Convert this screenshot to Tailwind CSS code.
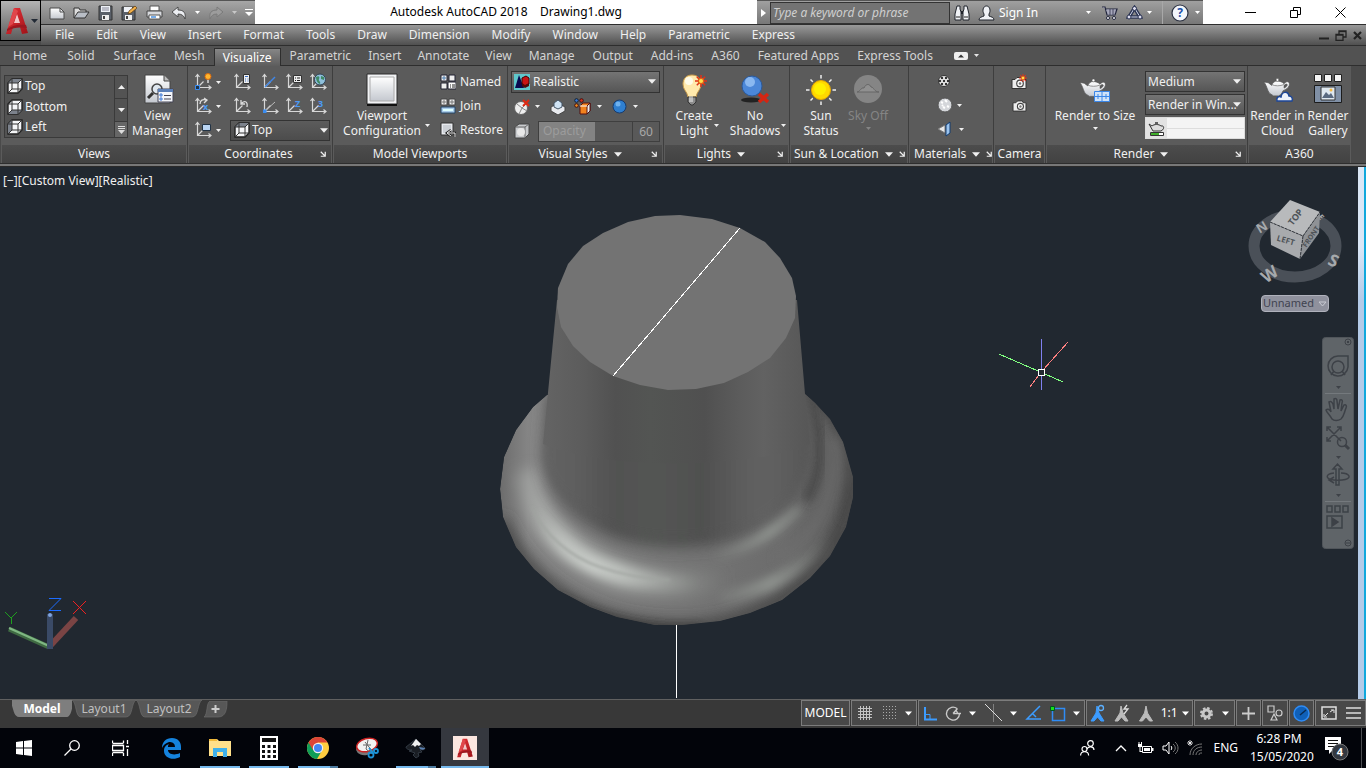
<!DOCTYPE html>
<html lang="en">
<head>
    <meta charset="UTF-8">
    <meta name="viewport" content="width=device-width, initial-scale=1.0">
    <title>Autodesk AutoCAD 2018 - Drawing1.dwg</title>
    <script src="https://cdn.jsdelivr.net/npm/@tailwindcss/browser@4"></script>
</head>
<body class="flex flex-col h-screen overflow-hidden bg-[#212830] font-['Noto_Sans','Open_Sans',sans-serif] text-xs text-[#f0f0f0]">

    <!-- Shared icons -->
    <svg class="absolute size-0" aria-hidden="true">
        <defs>
            <linearGradient id="metal" x1="0" y1="0" x2="0" y2="1"><stop offset="0" stop-color="#fff"/><stop offset="1" stop-color="#c4c8cf"/></linearGradient>
            <linearGradient id="redA" x1="0" y1="0" x2="1" y2="1"><stop offset="0" stop-color="#e8343a"/><stop offset="1" stop-color="#a01218"/></linearGradient>
        </defs>
        <symbol id="caret" viewBox="0 0 7 4"><path d="M0 0h7L3.500 4z" fill="currentColor"/></symbol>
        <symbol id="launch" viewBox="0 0 8 8"><path d="M1 1l5 5M7 1v6H1" fill="none" stroke="currentColor" stroke-width="1.600"/></symbol>
        <symbol id="cube" viewBox="0 0 16 16"><path d="M1 5l4-4h10v10l-4 4H1z" fill="#f4f5f7" stroke="#222" stroke-width="1.400"/></symbol>
        <symbol id="cubeEdges" viewBox="0 0 16 16"><path d="M1 5h10v10M11 5l4-4M5 1v10h10M5 11l-4 4" fill="none" stroke="#333"/></symbol>
        <symbol id="axes" viewBox="0 0 18 18"><path d="M3.500 2v12.500H17M3.500 14.500l6-6M1.500 4l2-2.500 2 2.500M14.500 12.500l2.500 2-2.500 2" fill="none" stroke="#d8d8d8" stroke-width="1.200"/></symbol>
        <symbol id="teapot" viewBox="0 0 32 24"><path d="M1 5l5 1 4 3c1-3 3-5 6-5s6 1 8 3c4-4 7-2 6 2-1 3-4 5-7 6l-2 4-3 2h-6l-3-2C5 17 5 10 1 5z" fill="url(#metal)" stroke="#555" stroke-width=".8"/><path d="M24 9c3-3 5-1 3 1-1 1-2 2-3 2z" fill="#5b5b5b" stroke="#555" stroke-width=".6"/><path d="M10 8c3 2 10 2 14 0" fill="none" stroke="#888"/><circle cx="16.500" cy="2.800" r="1.600" fill="#fff" stroke="#555" stroke-width=".6"/></symbol>
        <symbol id="logoA" viewBox="0 0 24 28"><path d="M1 27L9 1h6l8 25-6 1-2-7H8l-2 7z" fill="url(#redA)"/><path d="M12 7l3 9H9z" fill="#fff" fill-opacity=".75"/><path d="M9 1L3 20l5-3 5-13z" fill="#e0464b"/><path d="M2 22c6-4 12-5 19-4l1 3c-7-1-13-1-20 3z" fill="#9c1820"/></symbol>
        <symbol id="burst" viewBox="0 0 10 10"><path d="M5 0v10M0 5h10M1.500 1.500l7 7M8.500 1.500l-7 7" stroke="#e0301a" stroke-width="1.300"/><circle cx="5" cy="5" r="2.200" fill="#ffe04a" stroke="#e0601a"/></symbol>
        <symbol id="camera" viewBox="0 0 16 13"><path d="M1 3h3l2-2h5l1 2h3v9H1z" fill="#eee" stroke="#333"/><circle cx="9" cy="7" r="3.300" fill="#fff" stroke="#444" stroke-width="1.200"/><circle cx="9" cy="7" r="1.300" fill="#777"/></symbol>
    </svg>

    <!-- Title bar and menu bar -->
    <header class="flex shrink-0 h-[46px] bg-[#4b4b4b] border-b border-[#2e2e2e]">
        <button aria-label="Application menu" class="flex items-center gap-0.5 w-[41px] h-[41px] pl-1 border border-black bg-linear-to-b from-[#b4b4b4] to-[#5c5c5c]">
            <svg class="w-6 h-7"><use href="#logoA"/></svg>
            <svg class="w-[7px] h-1 text-[#222a35]"><use href="#caret"/></svg>
        </button>
        <div class="flex flex-col flex-1">
            <div class="flex items-stretch h-6 bg-white text-black">
                <div class="flex items-center gap-2 w-[214px] pl-2 bg-linear-to-b from-[#a6a6a6] to-[#7b7b7b] border-t border-[#555] [&>*]:shrink-0">
                    <button aria-label="New"><svg width="16" height="16" viewBox="0 0 16 16"><path d="M1 3h10l4 4v7H1z" fill="url(#metal)" stroke="#4a4a4a"/><path d="M11 3v4h4" fill="none" stroke="#4a4a4a"/></svg></button>
                    <button aria-label="Open"><svg width="17" height="16" viewBox="0 0 17 16"><path d="M1 13V3h5l1 2h6v2" fill="#ddd" stroke="#333"/><path d="M1 13l4-6h11l-4 6z" fill="#b9bec6" stroke="#333"/></svg></button>
                    <button aria-label="Save"><svg width="15" height="16" viewBox="0 0 15 16"><path d="M1 1h13v14H1z" fill="#5a6069" stroke="#333"/><path d="M3 1h9v6H3z" fill="#eef1f6"/><path d="M4 3h7M4 5h7" stroke="#889"/><path d="M4 10h7v5H4z" fill="#eee"/><path d="M5 11h2v3H5z" fill="#444"/></svg></button>
                    <button aria-label="Save As"><svg width="17" height="16" viewBox="0 0 17 16"><path d="M1 2h13v13H1z" fill="#5a6069" stroke="#333"/><path d="M3 2h8v5H3z" fill="#eef1f6"/><path d="M4 10h7v5H4z" fill="#eee"/><path d="M5 11h2v3H5z" fill="#444"/><path d="M7 9l1-3 6-5 2 2-6 5z" fill="#f2b04a" stroke="#5a3a10" stroke-width=".7"/></svg></button>
                    <button aria-label="Plot"><svg width="17" height="16" viewBox="0 0 17 16"><path d="M4 1h9v5H4z" fill="#fff" stroke="#555"/><path d="M1 6h15v6H1z" fill="#d8dade" stroke="#444"/><path d="M3 10h11v4H3z" fill="#fff" stroke="#555"/><path d="M5 12h5" stroke="#4a90e0" stroke-width="1.500"/></svg></button>
                    <button aria-label="Undo"><svg width="16" height="16" viewBox="0 0 16 16"><path d="M1 7l6-5v3c6 0 8 3 7 9-1-3-3-5-7-5v3z" fill="#eceef2" stroke="#444" stroke-width=".9"/></svg></button>
                    <svg class="w-[5px] h-[3px] text-white"><use href="#caret"/></svg>
                    <button aria-label="Redo"><svg width="16" height="16" viewBox="0 0 16 16"><path d="M15 7L9 2v3C3 5 1 8 2 14c1-3 3-5 7-5v3z" fill="#9c9c9c" stroke="#7a7a7a"/></svg></button>
                    <svg class="w-[5px] h-[3px] text-[#c8c8c8]"><use href="#caret"/></svg>
                    <button aria-label="Customize toolbar"><svg width="8" height="8" viewBox="0 0 8 8"><path d="M0 .5h8" stroke="#fff"/><path d="M0 3h8L4 7z" fill="#fff"/></svg></button>
                </div>
                <h1 class="flex-1 flex items-center justify-center whitespace-pre">Autodesk AutoCAD 2018    Drawing1.dwg</h1>
                <div class="flex items-center w-[446px] bg-linear-to-b from-[#a0a0a0] to-[#777] border-t border-[#555] text-white [&>*]:shrink-0">
                    <svg class="mx-1" width="5" height="8" viewBox="0 0 5 8"><path d="M0 0l5 4-5 4z" fill="#fff"/></svg>
                    <input type="text" aria-label="Search" placeholder="Type a keyword or phrase" class="w-[180px] h-[22px] px-0.5 bg-[#737373] border border-[#333] italic placeholder:text-[#cfcfcf]">
                    <button aria-label="Find" class="ml-1"><svg width="16" height="16" viewBox="0 0 16 16"><path d="M3 1h3v3l1 3v8H1V9zM13 1h-3v3L9 7v8h6V9z" fill="#f0f2f6" stroke="#20242c"/><path d="M7 6h2v3H7z" fill="#20242c"/><path d="M2 12h4M10 12h4" stroke="#222"/></svg></button>
                    <button class="flex items-center gap-1 ml-2 whitespace-nowrap text-white"><svg width="17" height="16" viewBox="0 0 17 16"><path d="M1 15c0-3 3-3 5-4V9C4 6 5 1 8.500 1S13 6 11 9v2c2 1 5 1 5 4z" fill="#f0f2f6" stroke="#20242c"/></svg>Sign In</button>
                    <svg class="w-[5px] h-[3px] ml-12"><use href="#caret"/></svg>
                    <button aria-label="Exchange Apps" class="ml-2.5"><svg width="17" height="16" viewBox="0 0 17 16"><path d="M1 2h3l2 8h8l2-6H5" fill="#eef" stroke="#20243c" stroke-width="1.200"/><path d="M6 6h9M6 8h8M9 4v6M12 4v6" stroke="#20243c" stroke-width=".7"/><circle cx="7" cy="13" r="1.500" fill="#fff" stroke="#20243c"/><circle cx="13" cy="13" r="1.500" fill="#fff" stroke="#20243c"/></svg></button>
                    <button aria-label="Stay connected" class="ml-2"><svg width="17" height="16" viewBox="0 0 17 16"><path d="M8.500 3L3 12h11z" fill="none" stroke="#2a3352" stroke-width="3.500"/><path d="M8.500 3L3 12h11z" fill="none" stroke="#cfd6ea"/><circle cx="8.500" cy="3.500" r="2" fill="#dde" stroke="#2a3352"/><circle cx="3" cy="12" r="2" fill="#dde" stroke="#2a3352"/><circle cx="14" cy="12" r="2" fill="#dde" stroke="#2a3352"/></svg></button>
                    <svg class="w-[5px] h-[3px] ml-1"><use href="#caret"/></svg>
                    <span class="w-px h-full ml-2.5 bg-[#a8a8a8]"></span>
                    <button aria-label="Help" class="ml-2"><svg width="18" height="18" viewBox="0 0 18 18"><circle cx="9" cy="9" r="8" fill="#f3f6fb" stroke="#2a3040" stroke-width="1.200"/><text x="9" y="13" text-anchor="middle" font-size="12" font-weight="bold" fill="#1c4fa8">?</text></svg></button>
                    <svg class="w-[5px] h-[3px] ml-1.5"><use href="#caret"/></svg>
                </div>
                <div class="flex items-center justify-between w-[163px] pl-[42px] pr-5">
                    <button aria-label="Minimize"><svg width="11" height="11" viewBox="0 0 11 11"><path d="M0 5.500h11" stroke="#000"/></svg></button>
                    <button aria-label="Restore"><svg width="11" height="11" viewBox="0 0 11 11"><path d="M.5 3.500h7v7h-7zM3.500 3V.5h7v7H8" fill="none" stroke="#000"/></svg></button>
                    <button aria-label="Close"><svg width="11" height="11" viewBox="0 0 11 11"><path d="M.5.5l10 10M10.500.5l-10 10" stroke="#000"/></svg></button>
                </div>
            </div>
            <div class="flex items-center justify-between h-[21px] pl-3.5 pr-1 border-t border-[#2e2e2e] bg-linear-to-b from-[#9a9a9a] to-[#505050]">
                <nav class="flex gap-[22px]">
                    <button>File</button><button>Edit</button><button>View</button><button>Insert</button><button>Format</button><button>Tools</button><button>Draw</button><button>Dimension</button><button>Modify</button><button>Window</button><button>Help</button><button>Parametric</button><button>Express</button>
                </nav>
                <div class="flex items-center gap-1.5">
                    <svg width="10" height="10" viewBox="0 0 10 10"><path d="M0 8.500h10" stroke="#222" stroke-width="2"/></svg>
                    <svg width="12" height="11" viewBox="0 0 12 11"><path d="M1 4.500h7v6H1zM4 4V1h7v6H8M4 1.500h7M1 5h7" fill="none" stroke="#222" stroke-width="1.300"/></svg>
                    <svg width="9" height="9" viewBox="0 0 9 9"><path d="M1 1l7 7M8 1L1 8" stroke="#222" stroke-width="2.200"/></svg>
                </div>
            </div>
        </div>
    </header>

    <!-- Ribbon tabs -->
    <nav class="flex shrink-0 h-5 pl-[3px] bg-[#525252] border-b border-[#2e2e2e] leading-[19px] text-[#d4d4d4]">
        <button class="px-2.5">Home</button>
        <button class="px-2.5">Solid</button>
        <button class="px-[9px]">Surface</button>
        <button class="px-[9px]">Mesh</button>
        <button class="h-[18px] px-2 mt-0.5 leading-4 text-white border border-b-0 border-[#2e2e2e] bg-linear-to-b from-[#868686] to-[#5d5d5d]">Visualize</button>
        <button class="px-[9px]">Parametric</button>
        <button class="px-2">Insert</button>
        <button class="px-2">Annotate</button>
        <button class="px-2">View</button>
        <button class="px-[9px]">Manage</button>
        <button class="px-[9px]">Output</button>
        <button class="px-[9px]">Add-ins</button>
        <button class="px-[9px]">A360</button>
        <button class="px-[9px]">Featured Apps</button>
        <button class="px-[9px]">Express Tools</button>
        <button aria-label="Minimize ribbon" class="flex items-center gap-1.5 ml-3 text-[#e4e4e4]">
            <svg width="14" height="8" viewBox="0 0 14 8"><rect width="14" height="8" rx="2" fill="#eee"/><path d="M4 5.500L7 2.500l3 3z" fill="#333"/></svg>
            <svg class="w-[5px] h-[3px]"><use href="#caret"/></svg>
        </button>
    </nav>

    <!-- Ribbon panels -->
    <main class="flex shrink-0 h-[98px] pl-px bg-[#4a4a4a] border-b border-[#2e2e2e]">
        <section class="flex flex-col w-[187px] bg-[#5b5b5b] border-r border-[#3e3e3e]">
            <div class="flex flex-1 pl-[3px]">
                <div class="flex w-[124px] h-[63px] mt-[9px] border border-[#3a3a3a] bg-[#535353]">
                    <div class="flex-1 flex flex-col justify-between">
                        <button class="flex items-center gap-0.5 h-5 pl-0.5"><svg class="size-4" viewBox="0 0 16 16"><use href="#cube"/><path d="M1 5l4-4h10l-4 4z" fill="#7c828c"/><use href="#cubeEdges"/></svg>Top</button>
                        <button class="flex items-center gap-0.5 h-5 pl-0.5"><svg class="size-4" viewBox="0 0 16 16"><use href="#cube"/><path d="M1 15l4-4h10l-4 4z" fill="#7c828c"/><use href="#cubeEdges"/></svg>Bottom</button>
                        <button class="flex items-center gap-0.5 h-5 pl-0.5"><svg class="size-4" viewBox="0 0 16 16"><use href="#cube"/><path d="M1 5l4-4v10l-4 4z" fill="#7c828c"/><use href="#cubeEdges"/></svg>Left</button>
                    </div>
                    <div class="flex flex-col w-[13px] border-l border-[#3a3a3a] divide-y divide-[#3a3a3a]">
                        <button aria-label="Scroll up" class="flex-1 grid place-items-center"><svg class="w-[7px] h-1 rotate-180"><use href="#caret"/></svg></button>
                        <button aria-label="Scroll down" class="flex-1 grid place-items-center"><svg class="w-[7px] h-1"><use href="#caret"/></svg></button>
                        <button aria-label="Expand list" class="w-full h-[15px] grid place-items-center bg-[#666]"><svg width="7" height="8" viewBox="0 0 7 8"><path d="M0 .5h7M0 2.500h7" stroke="#ddd"/><path d="M0 4h7L3.500 8z" fill="#ddd"/></svg></button>
                    </div>
                </div>
                <button class="flex-1 flex flex-col items-center gap-0.5 pt-2 leading-[15px]">
                    <svg width="32" height="32" viewBox="0 0 32 32"><path d="M3 1h19l6 6v22H3z" fill="url(#metal)" stroke="#444"/><path d="M22 1v6h6" fill="#bbb" stroke="#444"/><circle cx="15" cy="15" r="5" fill="#dfe7ef" stroke="#444" stroke-width="1.500"/><path d="M11 19l-5 5" stroke="#333" stroke-width="3"/><path d="M16 15h15v13H16z" fill="#f4f6fa" stroke="#445"/><path d="M16 15h15v3H16z" fill="#5a7fb8"/><path d="M22 21.500h7M22 25h7" stroke="#445"/><path d="M18 20h2v2h-2zM18 24h2v2h-2z" fill="none" stroke="#3a78d8"/></svg>
                    <span>View<br>Manager</span>
                </button>
            </div>
            <h2 class="h-[18px] mx-px text-center leading-[18px] bg-linear-to-b from-[#4c4c4c] to-[#424242]">Views</h2>
        </section>

        <section class="flex flex-col w-[145px] bg-[#5b5b5b] border-r border-[#3e3e3e]">
            <div class="flex-1 flex flex-col gap-1.5 pt-[7px] pl-1.5">
                <div class="flex items-center h-[18px]">
                    <button aria-label="UCS origin"><svg width="18" height="18" viewBox="0 0 18 18"><use href="#axes"/><path d="M1.500 12.500h4v4h-4z" fill="#234" stroke="#3a8cf0"/><path d="M14 2v8" stroke="#ddd" stroke-width="1.500"/><circle cx="14" cy="3.500" r="3" fill="#ffb52e" stroke="#d86a10"/></svg></button>
                    <svg class="w-[5px] h-[3px] ml-1 mr-3"><use href="#caret"/></svg>
                    <button aria-label="UCS settings"><svg width="18" height="18" viewBox="0 0 18 18"><use href="#axes"/><path d="M10.500 1.500h6v9h-6z" fill="#eee" stroke="#333"/><path d="M12 3.500h3M12 6h1M14.500 6h1M12 8h1M14.500 8h1" stroke="#3a6cc0"/></svg></button>
                    <button aria-label="UCS X" class="ml-2.5"><svg width="18" height="18" viewBox="0 0 18 18"><use href="#axes"/><path d="M4 14L14 4" stroke="#3f86e8" stroke-width="1.500"/></svg></button>
                    <button aria-label="Named UCS" class="ml-1.5"><svg width="18" height="18" viewBox="0 0 18 18"><use href="#axes"/><path d="M8.500 2.500h8v7h-8z" fill="#eee" stroke="#333"/><path d="M10 5h1M12 5h3M10 7.500h1M12 7.500h3" stroke="#222"/></svg></button>
                    <button aria-label="World UCS" class="ml-1.5"><svg width="18" height="18" viewBox="0 0 18 18"><use href="#axes"/><circle cx="11" cy="6.500" r="5.500" fill="#8fc0dc" stroke="#345"/><path d="M7 4c3-2 4 0 3 2s2 2 1 5c-3-1-4-4-4-7zM12 3l3 1v3l-3-1z" fill="#3f8a66"/></svg></button>
                </div>
                <div class="flex items-center h-[18px]">
                    <button aria-label="Rotate X"><svg class="overflow-visible" width="18" height="18" viewBox="0 0 18 18"><use href="#axes"/><path d="M6 7c0-4 3-5 6-4M10 1l3 2-3 3" fill="none" stroke="#ddd" stroke-width="1.300"/><text x="9" y="13" font-size="9" font-weight="bold" fill="#4b9af5">x</text></svg></button>
                    <svg class="w-[5px] h-[3px] ml-1 mr-3"><use href="#caret"/></svg>
                    <button aria-label="UCS previous"><svg width="18" height="18" viewBox="0 0 18 18"><use href="#axes"/><path d="M8 3v4h4M8 7c3-4 7-3 6 3" fill="none" stroke="#ddd" stroke-width="1.300"/></svg></button>
                    <button aria-label="UCS object" class="ml-2.5"><svg width="18" height="18" viewBox="0 0 18 18"><use href="#axes"/><path d="M4 14L14 5" stroke="#bbb"/><path d="M2 12.500h3.500V16H2z" fill="#3a8cf0"/></svg></button>
                    <button aria-label="Z axis vector" class="ml-1.5"><svg class="overflow-visible" width="18" height="18" viewBox="0 0 18 18"><use href="#axes"/><text x="10" y="10" font-size="9" font-weight="bold" fill="#4b9af5">Z</text></svg></button>
                    <button aria-label="3 point" class="ml-1.5"><svg class="overflow-visible" width="18" height="18" viewBox="0 0 18 18"><use href="#axes"/><text x="9" y="10" font-size="9" font-weight="bold" fill="#4b9af5">3</text></svg></button>
                </div>
                <div class="flex items-center h-[18px]">
                    <button aria-label="UCS view"><svg width="18" height="18" viewBox="0 0 18 18"><use href="#axes"/><path d="M8.500 3.500h8v6h-8z" fill="#b9d4f2" stroke="#234"/></svg></button>
                    <svg class="w-[5px] h-[3px] ml-1 mr-[9px]"><use href="#caret"/></svg>
                    <div class="relative w-[100px] h-[21px]">
                        <select aria-label="UCS preset" class="appearance-none w-full h-full pl-[21px] border border-[#333] bg-linear-to-b from-[#5c5c5c] to-[#4c4c4c]"><option>Top</option></select>
                        <svg class="absolute left-1 top-0.5 size-4 pointer-events-none" viewBox="0 0 16 16"><use href="#cube"/><path d="M1 5l4-4h10l-4 4z" fill="#7c828c"/><use href="#cubeEdges"/></svg>
                        <svg class="absolute right-0.5 top-2 w-2 h-[5px] pointer-events-none"><use href="#caret"/></svg>
                    </div>
                </div>
            </div>
            <h2 class="flex items-center h-[18px] mx-px pl-2 pr-[5px] bg-linear-to-b from-[#4c4c4c] to-[#424242]"><span class="flex-1 text-center">Coordinates</span><svg class="size-1.5"><use href="#launch"/></svg></h2>
        </section>

        <section class="flex flex-col w-[175px] bg-[#5b5b5b] border-r border-[#3e3e3e]">
            <div class="flex-1 flex">
                <button class="flex flex-col items-center gap-0.5 w-[98px] pt-[7px] leading-[15px]">
                    <svg width="32" height="33" viewBox="0 0 32 33"><path d="M1 1h30v30H1z" fill="#f2f3f5" stroke="#2c2c2c"/><path d="M4 4h24v24H4z" fill="url(#metal)" stroke="#aaa"/><path d="M1 32h30" stroke="#111" stroke-width="2"/></svg>
                    <span>Viewport<br>Configuration</span>
                </button>
                <svg class="w-[5px] h-[3px] mt-[58px] -ml-1.5 shrink-0"><use href="#caret"/></svg>
                <div class="flex flex-col gap-2 pt-2 pl-2.5">
                    <button class="flex items-center gap-1 h-4"><svg width="16" height="16" viewBox="0 0 16 16"><path d="M1 1h6v6H1zM9 1h6v6H9zM1 9h6v6H1z" fill="#eee" stroke="#223" /><path d="M3 3h2v2H3z" fill="#fff" stroke="#47a"/><path d="M8 8h8v7H8z" fill="#fff" stroke="#223"/><path d="M10 11h1M12 11h3M10 13h1M12 13h3" stroke="#222"/></svg>Named</button>
                    <button class="flex items-center gap-1 h-4"><svg width="16" height="16" viewBox="0 0 16 16"><path d="M1 1h6v6H1zM9 1h6v6H9z" fill="#eee" stroke="#444"/><path d="M3 3h2v2H3zM11 3h2v2h-2z" fill="none" stroke="#777"/><path d="M1 9h14v6H1z" fill="#a9cbea" stroke="#246"/><path d="M3 11h10v2H3z" fill="#dff"/></svg>Join</button>
                    <button class="flex items-center gap-1 h-4"><svg width="16" height="16" viewBox="0 0 16 16"><path d="M1 1h12v12H1z" fill="#e8eaee" stroke="#333"/><path d="M3 3h8v8H3z" fill="#ccd0d6"/><path d="M15 15v-4H8M11 8l-4 3 4 3" fill="none" stroke="#222" stroke-width="2.500"/><path d="M15 15v-4H8M11 8l-4 3 4 3" fill="none" stroke="#eee"/></svg>Restore</button>
                </div>
            </div>
            <h2 class="h-[18px] mx-px text-center leading-[18px] bg-linear-to-b from-[#4c4c4c] to-[#424242]">Model Viewports</h2>
        </section>

        <section class="flex flex-col w-[156px] bg-[#5b5b5b] border-r border-[#3e3e3e]">
            <div class="flex-1 flex flex-col pt-[5px] px-[3px]">
                <div class="relative h-[22px]">
                    <select aria-label="Visual style" class="appearance-none w-full h-full pl-[21px] border border-[#333] bg-linear-to-b from-[#747474] to-[#565656]"><option>Realistic</option></select>
                    <svg class="absolute left-[3px] top-[3px] size-4 pointer-events-none" viewBox="0 0 16 16"><path d="M0 0h16v16H0z" fill="#5fc8cc"/><path d="M5 1L1 14h9z" fill="#0a0a50"/><path d="M8 4l4-2 3 2v6l-4 2-3-2z" fill="#c81414" stroke="#400"/><path d="M8 9l3 2 4-2v3l-4 2-3-2z" fill="#500808"/></svg>
                    <svg class="absolute right-1 top-2 w-2 h-[5px] pointer-events-none"><use href="#caret"/></svg>
                </div>
                <div class="flex items-center h-[27px] pl-0.5">
                    <button aria-label="X-ray"><svg width="18" height="18" viewBox="0 0 18 18"><circle cx="8" cy="10" r="6.500" fill="#eee" stroke="#666"/><path d="M4 6l5 4 4-4M9 10l-3 6M9 10l5 3" fill="none" stroke="#888"/><path d="M10 2l6 6M16 2l-6 6" stroke="#e02a12" stroke-width="2"/></svg></button>
                    <svg class="w-[5px] h-[3px] ml-1 mr-2.5"><use href="#caret"/></svg>
                    <button aria-label="Facets"><svg width="16" height="16" viewBox="0 0 16 16"><path d="M1 8l7-4 7 4v4l-7 4-7-4z" fill="#e8eaee" stroke="#444"/><path d="M4 4l4-3 4 3v4l-4 2-4-2z" fill="#cfe3f5" stroke="#456"/></svg></button>
                    <button aria-label="Materials and textures" class="ml-2"><svg width="17" height="17" viewBox="0 0 17 17"><circle cx="2.500" cy="2.500" r="1.800" fill="#3a78d8" stroke="#123"/><circle cx="7.500" cy="2.500" r="1.800" fill="#d83018" stroke="#411"/><circle cx="2.500" cy="7.500" r="1.800" fill="#f08a1c" stroke="#411"/><path d="M6 8l3-3h7v8l-3 3H6z" fill="#f2821e" stroke="#511"/><path d="M13 8l3-3v8l-3 3z" fill="#eee" stroke="#511"/><path d="M6 8h7" stroke="#fff"/></svg></button>
                    <svg class="w-[5px] h-[3px] ml-1.5 mr-2.5"><use href="#caret"/></svg>
                    <button aria-label="Lighting"><svg width="15" height="15" viewBox="0 0 15 15"><circle cx="7.500" cy="7.500" r="6.500" fill="#2f7fd0" stroke="#173c70"/><circle cx="6" cy="5" r="2.500" fill="#6fb2f0"/></svg></button>
                    <svg class="w-[5px] h-[3px] ml-1.5"><use href="#caret"/></svg>
                </div>
                <div class="flex items-center h-[22px] pl-[3px]">
                    <svg width="16" height="16" viewBox="0 0 16 16"><path d="M1 4l4-3h10v10l-4 4H1z" fill="#c9cbce" stroke="#444"/><path d="M1 4h10v11M11 4l4-3" fill="none" stroke="#666"/><circle cx="7" cy="9" r="4" fill="#e8e8e8"/></svg>
                    <div class="relative flex-1 flex ml-2 h-[21px] border border-[#3f3f3f] bg-[#595959]">
                        <label for="opacity" class="flex items-center w-14 pl-1 bg-[#838383] text-[#9c9c9c]">Opacity</label>
                        <input id="opacity" type="range" value="60" disabled class="absolute left-0 top-0 w-[94px] h-full opacity-0">
                    </div>
                    <input type="text" aria-label="Opacity value" value="60" disabled class="w-[27px] h-[21px] text-center border border-l-0 border-[#3f3f3f] bg-[#595959] text-[#a8a8a8]">
                </div>
            </div>
            <h2 class="flex items-center h-[18px] mx-px pr-[5px] bg-linear-to-b from-[#4c4c4c] to-[#424242]"><span class="flex-1 flex items-center justify-center gap-1.5">Visual Styles<svg class="w-2 h-[5px]"><use href="#caret"/></svg></span><svg class="size-1.5"><use href="#launch"/></svg></h2>
        </section>

        <section class="flex flex-col w-[126px] bg-[#5b5b5b] border-r border-[#3e3e3e]">
            <div class="flex-1 flex">
                <button class="flex flex-col items-center gap-0.5 w-[60px] pt-2 leading-[15px]">
                    <svg width="32" height="32" viewBox="0 0 32 32"><path d="M14 1c6 0 9 4 9 9 0 6-4 7-5 13h-8C9 17 5 16 5 10c0-5 3-9 9-9z" fill="#ffe9ac" stroke="#c89a4a"/><ellipse cx="11" cy="7" rx="4" ry="4" fill="#fffbe8"/><path d="M10 23h8v5l-3 3h-2l-3-3z" fill="#8c8c8c" stroke="#333"/><path d="M12 22v6M14 22v6" stroke="#eee"/><use href="#burst" x="17" y="1" width="12" height="12"/></svg>
                    <span>Create<br>Light</span>
                </button>
                <svg class="w-[5px] h-[3px] mt-[58px] -ml-2.5 mr-1.5 shrink-0"><use href="#caret"/></svg>
                <button class="flex flex-col items-center gap-0.5 w-[60px] pt-2 leading-[15px]">
                    <svg width="32" height="32" viewBox="0 0 32 32"><ellipse cx="12" cy="26" rx="10" ry="2.500" fill="#222"/><circle cx="13" cy="12" r="10" fill="#4b87d8" stroke="#2b5a9c"/><circle cx="11" cy="8" r="5" fill="#8ab8f0"/><path d="M20 20l9 8M29 20l-9 8" stroke="#d62512" stroke-width="3.500"/></svg>
                    <span>No<br>Shadows</span>
                </button>
                <svg class="w-[5px] h-[3px] mt-[58px] -ml-1 shrink-0"><use href="#caret"/></svg>
            </div>
            <h2 class="flex items-center h-[18px] mx-px pr-[5px] bg-linear-to-b from-[#4c4c4c] to-[#424242]"><span class="flex-1 flex items-center justify-center gap-1.5">Lights<svg class="w-2 h-[5px]"><use href="#caret"/></svg></span><svg class="size-1.5"><use href="#launch"/></svg></h2>
        </section>

        <section class="flex flex-col w-[119px] bg-[#5b5b5b] border-r border-[#3e3e3e]">
            <div class="flex-1 flex">
                <button class="flex flex-col items-center gap-0.5 w-[62px] pt-2 leading-[15px]">
                    <svg width="32" height="32" viewBox="0 0 32 32"><path d="M16 1v30M1 16h30M5.500 5.500l21 21M26.500 5.500l-21 21" stroke="#eee" stroke-width="1.500"/><circle cx="16" cy="16" r="11.500" fill="#5b5b5b"/><circle cx="16" cy="16" r="9.500" fill="#ffd900" stroke="#e8a800"/><circle cx="15" cy="15" r="6" fill="#fff000"/></svg>
                    <span>Sun<br>Status</span>
                </button>
                <button class="flex flex-col items-center gap-0.5 w-[32px] pt-2 leading-[15px] whitespace-nowrap text-[#858585]">
                    <svg width="30" height="32" viewBox="0 0 30 32"><circle cx="15" cy="15" r="14" fill="#858585"/><path d="M4 18c3 0 4-5 7-4 2-5 6-4 7-1 3 0 3 5 8 5z" fill="#909090" stroke="#666"/></svg>
                    Sky Off
                    <svg class="w-[5px] h-[3px] mt-0.5"><use href="#caret"/></svg>
                </button>
            </div>
            <h2 class="flex items-center gap-1.5 h-[18px] mx-px pl-[3px] pr-[5px] whitespace-nowrap bg-linear-to-b from-[#4c4c4c] to-[#424242]"><span class="flex-1">Sun &amp; Location</span><svg class="shrink-0 w-2 h-[5px]"><use href="#caret"/></svg><svg class="shrink-0 size-1.5"><use href="#launch"/></svg></h2>
        </section>

        <section class="flex flex-col w-[85px] bg-[#5b5b5b] border-r border-[#3e3e3e]">
            <div class="flex-1 flex flex-col gap-2 pt-[7px] pl-7">
                <button aria-label="Materials browser" class="flex items-center h-4"><svg width="14" height="12" viewBox="0 0 14 12"><circle cx="7" cy="6" r="5.500" fill="#ddd" stroke="#333"/><path d="M4 2h2v2H4zM8 2h2v2H8zM2 5h2v2H2zM6 5h2v2H6zM10 5h2v2h-2zM4 8h2v2H4zM8 8h2v2H8z" fill="#333"/></svg></button>
                <button aria-label="Materials / Textures" class="flex items-center gap-1 h-4"><svg width="16" height="16" viewBox="0 0 16 16"><circle cx="8" cy="8" r="7" fill="#d4d6da" stroke="#555"/><path d="M4 5l2 1M8 3l2 2M6 10l2 1M10 9l2 1M5 8l1 1" stroke="#fff" stroke-width="2"/></svg><svg class="w-[5px] h-[3px]"><use href="#caret"/></svg></button>
                <button aria-label="Material mapping" class="flex items-center gap-1 h-4"><svg width="16" height="16" viewBox="0 0 16 16"><path d="M1 8l7-4v8z" fill="#e8e8e8" stroke="#777"/><path d="M9 4l4-3v11l-4 3z" fill="#9cc4ee" stroke="#123c70"/></svg><svg class="w-[5px] h-[3px] ml-0.5"><use href="#caret"/></svg></button>
            </div>
            <h2 class="flex items-center gap-1.5 h-[18px] mx-px pl-1 pr-[5px] bg-linear-to-b from-[#4c4c4c] to-[#424242]"><span class="flex-1">Materials</span><svg class="shrink-0 w-2 h-[5px]"><use href="#caret"/></svg><svg class="shrink-0 size-1.5"><use href="#launch"/></svg></h2>
        </section>

        <section class="flex flex-col w-[52px] bg-[#5b5b5b] border-r border-[#3e3e3e]">
            <div class="flex-1 flex flex-col items-center gap-2 pt-2">
                <button aria-label="Create camera"><svg width="17" height="16" viewBox="0 0 17 16"><use href="#camera" y="2" width="16" height="14"/><use href="#burst" x="8" y="0" width="8" height="8"/></svg></button>
                <button aria-label="Show cameras"><svg width="16" height="16" viewBox="0 0 16 16"><use href="#camera" y="2" width="15" height="12"/></svg></button>
            </div>
            <h2 class="h-[18px] mx-px text-center leading-[18px] bg-linear-to-b from-[#4c4c4c] to-[#424242]">Camera</h2>
        </section>

        <section class="flex flex-col w-[202px] bg-[#5b5b5b] border-r border-[#3e3e3e]">
            <div class="flex-1 flex justify-between pr-0.5">
                <button class="flex flex-col items-center gap-0.5 w-[98px] pt-2 leading-[15px] whitespace-nowrap">
                    <svg width="32" height="32" viewBox="0 0 32 32"><use href="#teapot" y="4" width="28" height="21"/><path d="M15.500 17.500h15v10h-15z" fill="#cfe2f8" stroke="#3a86e8"/><path d="M23 18v10M16 22.500h14M19 20v5M27 20v5" stroke="#3a86e8"/></svg>
                    Render to Size
                    <svg class="w-[5px] h-[3px] mt-0.5"><use href="#caret"/></svg>
                </button>
                <div class="flex flex-col gap-0.5 w-[100px] pt-[5px]">
                    <div class="relative h-[21px]">
                        <select aria-label="Render preset" class="appearance-none w-full h-full pl-0.5 border border-[#333] bg-linear-to-b from-[#747474] to-[#565656]"><option>Medium</option></select>
                        <svg class="absolute right-1 top-2 w-2 h-[5px] pointer-events-none"><use href="#caret"/></svg>
                    </div>
                    <div class="relative h-[21px]">
                        <select aria-label="Render in" class="appearance-none w-full h-full pl-0.5 border border-[#333] bg-linear-to-b from-[#747474] to-[#565656]"><option>Render in Win...</option></select>
                        <svg class="absolute right-1 top-2 w-2 h-[5px] pointer-events-none"><use href="#caret"/></svg>
                    </div>
                    <div class="flex h-[22px] border border-[#ddd] bg-[#e2e2e2]">
                        <svg class="mx-0.5 my-px" width="17" height="18" viewBox="0 0 17 18"><path d="M1 5l3 2c2-2 7-2 9 0 3-1 4 3 0 5H5z" fill="#ddd" stroke="#333"/><path d="M7 4h3" stroke="#333" stroke-width="1.500"/><path d="M2.500 13.500h13v3h-13z" fill="#fff" stroke="#333"/><path d="M3 15h8" stroke="#3fae2a" stroke-width="2"/></svg>
                        <div class="flex-1 flex flex-col divide-y divide-[#ddd] bg-[#f4f4f4]"><span class="flex-1"></span><span class="flex-1"></span></div>
                    </div>
                </div>
            </div>
            <h2 class="flex items-center h-[18px] mx-px pr-[5px] bg-linear-to-b from-[#4c4c4c] to-[#424242]"><span class="flex-1 flex items-center justify-center gap-1.5">Render<svg class="w-2 h-[5px]"><use href="#caret"/></svg></span><svg class="size-1.5"><use href="#launch"/></svg></h2>
        </section>

        <section class="flex flex-col w-[103px] bg-[#5b5b5b]">
            <div class="flex-1 flex">
                <button class="flex flex-col items-center gap-0.5 w-[59px] pt-2 leading-[15px] whitespace-nowrap">
                    <svg width="32" height="32" viewBox="0 0 32 32"><use href="#teapot" x="1" y="3" width="28" height="22"/><path d="M15 27c-1-4 2-5 4-4 1-6 7-6 8-1 3 0 4 3 3 5z" fill="#eef2fa" stroke="#1c4698" stroke-width="1.500"/></svg>
                    <span>Render in<br>Cloud</span>
                </button>
                <button class="flex flex-col items-center gap-0.5 w-[42px] pt-2 leading-[15px]">
                    <svg width="32" height="32" viewBox="0 0 32 32"><path d="M2.500.5h7v7h-7zM12.500.5h7v7h-7zM22.500.5h7v7h-7z" fill="#f4f4f4" stroke="#222"/><path d="M2.500 11.500h27v17h-27z" fill="#8090a6" stroke="#1c1c1c"/><path d="M9 13h14v13H9z" fill="#dfe8f0" stroke="#333"/><path d="M10 24l4-6 3 3 2-2 3 5z" fill="#5a6a80"/><circle cx="19" cy="16" r="1.500" fill="#f5b942"/></svg>
                    <span>Render<br>Gallery</span>
                </button>
            </div>
            <h2 class="h-[18px] mx-px text-center leading-[18px] bg-linear-to-b from-[#4c4c4c] to-[#424242]">A360</h2>
        </section>
    </main>
    <div class="shrink-0 h-[3px] bg-[#787878] border-b border-[#2a2a2a]"></div>

    <!-- Drawing area -->
    <div class="flex flex-1 min-h-0">
        <div class="relative flex-1 overflow-hidden">
            <p class="absolute left-[3px] top-1.5 leading-4">[−][Custom View][Realistic]</p>

            <!-- Solid model -->
            <svg class="absolute left-1/2 bottom-0 -translate-x-1/2" width="360" height="486" viewBox="499 213 360 486">
                <defs>
                    <clipPath id="flangeClip"><path id="flange" d="M547 395L533 407 516 430 504 457 500 489 503 517 516 547 534 569 558 590 590 607 617 617 655 625 682 625 720 621 750 613 782 600 810 578 830 556 846 527 853 497 853 477 843 442 830 419 815 403 805 394z"/></clipPath>
                    <linearGradient id="flangeFill" gradientUnits="userSpaceOnUse" x1="500" y1="0" x2="853" y2="0"><stop offset="0" stop-color="#6c6c6c"/><stop offset=".08" stop-color="#858585"/><stop offset=".4" stop-color="#787878"/><stop offset=".8" stop-color="#6c6c6c"/><stop offset="1" stop-color="#565656"/></linearGradient>
                    <linearGradient id="coneFill" gradientUnits="userSpaceOnUse" x1="543" y1="0" x2="812" y2="0"><stop offset="0" stop-color="#646464"/><stop offset=".15" stop-color="#5c5c5c"/><stop offset=".27" stop-color="#515151"/><stop offset=".4" stop-color="#535553"/><stop offset=".6" stop-color="#505050"/><stop offset=".72" stop-color="#5b5b5b"/><stop offset=".82" stop-color="#626262"/><stop offset="1" stop-color="#565656"/></linearGradient>
                    <linearGradient id="shineFade" gradientUnits="userSpaceOnUse" x1="510" y1="0" x2="730" y2="0"><stop offset="0" stop-color="#c4c8c4" stop-opacity=".1"/><stop offset=".25" stop-color="#c4c8c4" stop-opacity=".9"/><stop offset=".5" stop-color="#bcc0bc"/><stop offset="1" stop-color="#909490" stop-opacity="0"/></linearGradient>
                    <linearGradient id="coreFade" gradientUnits="userSpaceOnUse" x1="535" y1="0" x2="700" y2="0"><stop offset="0" stop-color="#c8ccc8" stop-opacity="0"/><stop offset=".35" stop-color="#c8ccc8"/><stop offset="1" stop-color="#a0a4a0" stop-opacity="0"/></linearGradient>
                    <linearGradient id="glintFade" gradientUnits="userSpaceOnUse" x1="710" y1="0" x2="830" y2="0"><stop offset="0" stop-color="#8e928e" stop-opacity="0"/><stop offset=".5" stop-color="#8e928e"/><stop offset="1" stop-color="#8e928e" stop-opacity="0"/></linearGradient>
                    <filter id="soft4" x="-30%" y="-50%" width="160%" height="200%"><feGaussianBlur stdDeviation="4"/></filter>
                    <filter id="soft7" x="-30%" y="-50%" width="160%" height="200%"><feGaussianBlur stdDeviation="7"/></filter>
                    <filter id="soft1" x="-30%" y="-30%" width="160%" height="160%"><feGaussianBlur stdDeviation="1.500"/></filter>
                </defs>
                <g clip-path="url(#flangeClip)">
                    <use href="#flange" fill="url(#flangeFill)"/>
                    <path d="M500 520C530 590 600 628 680 628 760 628 840 580 856 480" fill="none" stroke="#444" stroke-width="14" filter="url(#soft7)"/>
                    <path d="M560 598C600 622 660 632 700 628" fill="none" stroke="#2e2e2e" stroke-width="5" filter="url(#soft4)"/>
                    <path d="M805 394C850 420 856 470 845 520" fill="none" stroke="#4a4a4a" stroke-width="9" filter="url(#soft4)"/>
                    <path d="M524 470C532 520 575 580 680 584 700 584 715 582 730 578" fill="none" stroke="url(#shineFade)" stroke-width="24" filter="url(#soft7)"/>
                    <path d="M535 515C560 560 610 582 700 582" fill="none" stroke="url(#coreFade)" stroke-width="12" filter="url(#soft4)"/>
                    <path d="M808 396C820 430 828 460 806 500" fill="none" stroke="#4c4c4c" stroke-width="12" filter="url(#soft4)"/>
                    <path d="M834 436C842 480 826 530 780 560" fill="none" stroke="#707070" stroke-width="8" filter="url(#soft7)"/>
                    <path d="M547 395L543 450C542 480 556 502 575 517 605 540 640 549 680 548 725 547 765 535 790 508 808 488 813 465 811 440L805 394z" fill="url(#coneFill)" filter="url(#soft7)"/>
                    <path d="M548 395L544 450C543 475 560 495 580 508 610 530 640 539 680 538 725 537 760 525 785 500 802 484 810 465 809 440L805 394z" fill="url(#coneFill)" filter="url(#soft4)"/>
                    <path d="M715 556C748 548 772 534 800 508" fill="none" stroke="url(#glintFade)" stroke-width="11" filter="url(#soft4)"/>
                    <path d="M720 598C765 590 795 575 830 540" fill="none" stroke="url(#glintFade)" stroke-width="13" filter="url(#soft4)"/>
                    <path d="M532 508C545 535 570 557 600 567 625 576 650 579 670 580" fill="none" stroke="#a0a4a0" stroke-width="2" filter="url(#soft1)"/>
                </g>
                <path d="M557 300L543 444C600 470 750 470 810 444L805 394 797 300z" fill="url(#coneFill)"/>
                <path d="M557 307L558 288 568 264 583 246 603 233 628 222 655 216 680 215 712 219 740 228 765 242 780 258 792 278 796 296 795 318 786 338 770 358 748 372 724 383 696 389 668 390 640 385 613 376 590 362 573 346 561 327z" fill="#737373"/>
                <path d="M740 228L613 376" stroke="#fff" shape-rendering="crispEdges"/>
                <path d="M676.500 625v73" stroke="#fff" shape-rendering="crispEdges"/>
            </svg>

            <!-- Crosshair -->
            <svg class="absolute left-[998px] top-[171px]" width="72" height="54" viewBox="998 338 72 54" fill="none" shape-rendering="crispEdges">
                <path d="M999 354l39 17M1045 374l18 8" stroke="#80ff80"/>
                <path d="M1068 342l-25 28M1039 375l-9 12" stroke="#ff8080"/>
                <path d="M1041.500 339v30M1041.500 376v14" stroke="#8080f0"/>
                <path d="M1038.500 369.500h6v6h-6z" stroke="#fff"/>
            </svg>

            <!-- UCS icon -->
            <svg class="absolute left-0 bottom-12" width="92" height="56" viewBox="0 595 92 56" fill="none">
                <path d="M50 646L76 618" stroke="#7a4444" stroke-width="6"/>
                <path d="M49 647L9 629" stroke="#3f6a42" stroke-width="5"/><path d="M49 646L9 628" stroke="#7fb782" stroke-width="2"/>
                <path d="M50 649V614" stroke="#3a4a66" stroke-width="6"/><circle cx="50" cy="615" r="2" fill="#7fa4e0"/>
                <path d="M5 612l6 6 6-6M11.500 618v6" stroke="#1fa01f"/>
                <path d="M49 598.500h12L49 610.500h12" stroke="#1c6cff"/>
                <path d="M73 601l13 13M86 601l-13 13" stroke="#f02020"/>
            </svg>

            <!-- ViewCube -->
            <svg class="absolute right-3 top-7" width="100" height="92" viewBox="1246 195 100 92">
                <ellipse cx="1295" cy="246" rx="41" ry="31" fill="none" stroke="#4a5058" stroke-width="11"/>
                <g font-size="17" font-weight="bold" fill="#a6a9ac" text-anchor="middle">
                    <text transform="translate(1264 231) rotate(-30)" font-size="13">N</text>
                    <text transform="translate(1331 266) rotate(25)">S</text>
                    <text transform="translate(1273 279) rotate(-35)">W</text>
                    <text transform="translate(1319 219) rotate(50)" font-size="8">E</text>
                </g>
                <path d="M1290 200l30 12-17 24-33-14z" fill="#b8babc"/>
                <path d="M1270 222l33 14-3 23-29-14z" fill="#a8aaad"/>
                <path d="M1303 236l17-24-1 21-19 26z" fill="#8f9296"/>
                <path d="M1270 222l33 14 17-24M1303 236l-3 23" fill="none" stroke="#30343a" stroke-dasharray="3 1"/>
                <g font-size="9" font-weight="bold" fill="#4e5358" text-anchor="middle">
                    <text transform="translate(1298 219) rotate(-52)">TOP</text>
                    <text transform="translate(1285 243) rotate(16)" font-size="8">LEFT</text>
                    <text transform="translate(1313 238) rotate(-55)" font-size="7">FRONT</text>
                </g>
            </svg>
            <button class="absolute right-[29px] top-32 flex items-center justify-center gap-1 w-[68px] h-[17px] rounded border border-[#b0b2bc] bg-[#8f919d] text-[11px] text-[#3f4350]">Unnamed
                <svg width="9" height="6" viewBox="0 0 9 6"><path d="M1 1h7L4.500 5z" fill="none" stroke="#c8cad2"/></svg>
            </button>

            <!-- Navigation bar -->
            <svg class="absolute right-1 top-[170px]" width="32" height="212" viewBox="0 0 32 212" fill="none" stroke="#3d4147" stroke-width="1.500">
                <rect x=".5" y=".5" width="31" height="211" rx="3" fill="#5f6468" stroke="#50555a" stroke-width="1"/>
                <circle cx="26" cy="5" r="3" stroke-width="1"/><path d="M25 4l2 2M27 4l-2 2" stroke-width="1"/>
                <path d="M16 19h10v11a10 10 0 1 1-10-11z"/><circle cx="16" cy="30" r="6"/><path d="M12 34l-3 4M20 34l3 4"/>
                <path d="M14 49h5l-2.500 3z" fill="#3d4147" stroke="none"/>
                <path d="M3 56.500h26" stroke="#74797d" stroke-width="1"/>
                <path d="M10 82c-2-4-5-6-6-9 2-2 4 0 5 2l-2-10c2-1 3 0 4 2l1 5V62c2-1 3 0 3 2l1 8 2-9c2-1 3 1 2 3l-1 8 3-6c2-1 3 1 2 3-2 5-2 8-5 11-3 2-7 2-9 0z"/>
                <path d="M5 90l14 14M19 90L5 104M5 94v-4h4M15 90h4v4M5 100v4h4"/><circle cx="20" cy="105" r="4.500"/><path d="M23 108l4 4" stroke-width="3"/>
                <path d="M14 119h5l-2.500 3z" fill="#3d4147" stroke="none"/>
                <path d="M14 148v-16h-3l4.500-5 4.500 5h-3v16zM12 136c-9 1-9 6 0 7 9 1 16-1 15-4-1-2-5-3-8-3M12 140l-5 3 5 3"/>
                <path d="M14 157h5l-2.500 3z" fill="#3d4147" stroke="none"/>
                <path d="M3 164.500h26" stroke="#74797d" stroke-width="1"/>
                <path d="M5 169h5v6H5zM13 169h5v6h-5zM21 169h5v6h-5zM5 179h15v12H5z"/><path d="M10 181l6 4-6 4z" fill="#3d4147"/>
                <circle cx="26" cy="206" r="3" stroke-width="1"/><path d="M24 206h4" stroke-width="1"/>
            </svg>
        </div>
        <div class="w-2 border-r-2 border-[#11a8dc] bg-linear-to-b from-[#dbe7f6] from-15% to-[#b4cbe8] to-25%"></div>
    </div>

    <!-- Layout tabs and status bar -->
    <footer class="flex shrink-0 justify-between h-[29px] border-t border-[#606060] bg-[#383838]">
        <div class="flex h-[18px] pl-3 leading-[15px] text-[#c0c0c0]">
            <button class="relative w-[60px] pb-0.5 font-bold text-white"><svg class="absolute inset-0" width="60" height="18" viewBox="0 0 60 18"><path d="M-4 0h68c-5 3-3 17-10 17H7C0 17 2 3-4 0z" fill="#7e7e7e"/></svg><span class="relative">Model</span></button>
            <button class="relative w-16 pb-0.5"><svg class="absolute inset-0" width="64" height="18" viewBox="0 0 64 18"><path d="M0 0h64c-5 3-3 17-10 17H9C3 17 5 3 0 0z" fill="#575757" stroke="#6a6a6a" stroke-width=".7"/></svg><span class="relative">Layout1</span></button>
            <button class="relative w-[66px] pb-0.5"><svg class="absolute inset-0" width="66" height="18" viewBox="0 0 66 18"><path d="M0 0h66c-5 3-3 17-10 17H9C3 17 5 3 0 0z" fill="#575757" stroke="#6a6a6a" stroke-width=".7"/></svg><span class="relative">Layout2</span></button>
            <button aria-label="New layout" class="ml-0.5"><svg width="24" height="17" viewBox="0 0 24 17"><path d="M6 0h17c0 8-1 16-9 16H0C4 13 2 2 6 0z" fill="#575757" stroke="#6a6a6a" stroke-width=".7"/><path d="M11.500 4v8M7.500 8h8" stroke="#ccc" stroke-width="2"/></svg></button>
        </div>
        <div class="flex gap-px pb-0.5 text-white [&>div]:flex [&>div]:items-center [&>div]:justify-around [&>div]:border [&>div]:border-[#7c7c7c] [&>div]:bg-[#484848]">
            <div class="w-[49px]"><button>MODEL</button></div>
            <div class="w-[66px]">
                <button aria-label="Grid"><svg width="16" height="16" viewBox="0 0 16 16"><path d="M3.500 1v14M6.500 1v14M9.500 1v14M12.500 1v14M1 3.500h14M1 6.500h14M1 9.500h14M1 12.500h14" stroke="#c4c4c4"/></svg></button>
                <button aria-label="Snap"><svg width="14" height="14" viewBox="0 0 14 14"><path d="M1.500 0v14M4.500 0v14M7.500 0v14M10.500 0v14M13.500 0v14" stroke="#aaa" stroke-dasharray="1 2"/></svg></button>
                <svg class="w-[7px] h-[5px]"><use href="#caret"/></svg>
            </div>
            <div class="w-[167px]">
                <button aria-label="Ortho"><svg width="15" height="15" viewBox="0 0 15 15" fill="none" stroke="#3c9cff"><path d="M2 1v12.500h12" stroke-width="2"/><path d="M2 8.500h5V13"/></svg></button>
                <button aria-label="Polar"><svg width="17" height="17" viewBox="0 0 17 17" fill="none" stroke="#ccc" stroke-width="1.300"><path d="M12 3.500a6.500 6.500 0 1 0 2.500 5M8 8.500l4.500-5M8 8.500h8M11 5.500c1 1 1.500 2 1.500 3"/></svg></button>
                <svg class="w-[7px] h-[5px]"><use href="#caret"/></svg>
                <button aria-label="Isodraft"><svg width="19" height="20" viewBox="0 0 19 20" fill="none"><path d="M9.500 1v18" stroke="#808080"/><path d="M1 1l17 17" stroke="#ddd"/></svg></button>
                <svg class="w-[7px] h-[5px]"><use href="#caret"/></svg>
                <button aria-label="Object tracking"><svg width="17" height="16" viewBox="0 0 17 16" fill="none" stroke="#3c9cff" stroke-width="1.500"><path d="M15 1L2 14h14M7 8l4 4"/></svg></button>
                <button aria-label="Object snap"><svg width="17" height="17" viewBox="0 0 17 17"><path d="M3.500 3.500h12v12h-12z" fill="none" stroke="#2f8cf5" stroke-width="1.500"/><path d="M1.500 1.500h4v4h-4z" fill="#19e019" stroke="#052"/></svg></button>
                <svg class="w-[7px] h-[5px]"><use href="#caret"/></svg>
            </div>
            <div class="w-[107px]">
                <button aria-label="Annotation visibility"><svg width="17" height="18" viewBox="0 0 17 18"><path d="M7 2l2 7 5 8h-3l-3.500-4L4 17H1l5-8z" fill="#3c9cff" stroke="#3c9cff"/><circle cx="11" cy="4" r="2.500" fill="#484848" stroke="#5cb0ff" stroke-width="1.300"/></svg></button>
                <button aria-label="Auto scale"><svg width="17" height="18" viewBox="0 0 17 18"><path d="M7 2l2 7 5 8h-3l-3.500-4L4 17H1l5-8z" fill="#bbb" stroke="#bbb"/><path d="M13 1l-3 4h4l-4 5" fill="none" stroke="#ddd" stroke-width="1.300"/></svg></button>
                <button aria-label="Annotation scale icon"><svg width="16" height="18" viewBox="0 0 16 18"><path d="M8 2l1.500 7 5 8h-3L8 13l-3.500 4h-3l5-8z" fill="#bbb" stroke="#bbb"/></svg></button>
                <button class="flex items-center gap-1">1:1<svg class="w-[7px] h-[5px]"><use href="#caret"/></svg></button>
            </div>
            <div class="w-[41px]">
                <button aria-label="Workspace"><svg width="13" height="13" viewBox="0 0 13 13"><circle cx="6.500" cy="6.500" r="3.500" fill="none" stroke="#c8c8c8" stroke-width="3"/><circle cx="6.500" cy="6.500" r="5.500" fill="none" stroke="#c8c8c8" stroke-width="2" stroke-dasharray="2.500 1.820"/></svg></button>
                <svg class="w-[7px] h-[5px]"><use href="#caret"/></svg>
            </div>
            <div class="w-[25px]"><button aria-label="Annotation monitor"><svg width="15" height="15" viewBox="0 0 15 15"><path d="M7.500 1v13M1 7.500h13" stroke="#ccc" stroke-width="1.800"/></svg></button></div>
            <div class="w-[26px]"><button aria-label="Isolate objects"><svg width="16" height="16" viewBox="0 0 16 16" fill="none" stroke="#ccc" stroke-width="1.200"><path d="M1 1h6v6H1zM7 9l3 6H4z"/><circle cx="12" cy="8" r="3"/></svg></button></div>
            <div class="w-[25px]"><button aria-label="Graphics performance"><svg width="17" height="17" viewBox="0 0 17 17"><circle cx="8.500" cy="8.500" r="7.500" fill="#1060b8" stroke="#2f8cf5" stroke-width="1.500"/><path d="M7 10l6-5" stroke="#0a2a50" stroke-width="1.500"/></svg></button></div>
            <div class="w-[51px]">
                <button aria-label="Clean screen"><svg width="16" height="14" viewBox="0 0 16 14" fill="none" stroke="#e0e0e0"><path d="M1 1h14v12H1z" stroke-width="1.500"/><path d="M9 6l3-2M4 10l3-3M10 4h3v3M3 8v3h3"/></svg></button>
                <button aria-label="Customization"><svg width="15" height="12" viewBox="0 0 15 12"><path d="M0 1h15M0 6h15M0 11h15" stroke="#ddd" stroke-width="1.500"/></svg></button>
            </div>
        </div>
    </footer>

    <!-- Windows taskbar -->
    <div class="flex shrink-0 justify-between h-10 bg-[#02040a] text-white">
        <div class="flex [&>button]:flex [&>button]:items-center [&>button]:justify-center [&>button]:w-12">
            <button aria-label="Start"><svg width="16" height="16" viewBox="0 0 16 16"><path d="M0 2l7-1v6.500H0zM8 1l8-1v7.500H8zM0 8.500h7V15l-7-1zM8 8.500h8V16l-8-1z" fill="#fff"/></svg></button>
            <button aria-label="Search"><svg width="16" height="16" viewBox="0 0 16 16" fill="none" stroke="#fff" stroke-width="1.300"><circle cx="10.500" cy="5.500" r="4.800"/><path d="M7 9l-6.500 6.500"/></svg></button>
            <button aria-label="Task view"><svg width="17" height="16" viewBox="0 0 17 16" fill="none" stroke="#fff"><path d="M.5 3V.500M11.500 3V.500M.5 3.500h11M.5 5.500h11v5H.5zM.5 12.500h11M.5 13v3M11.500 13v3M15.500 0v4M15.500 9v7M14 6.500h3" stroke-width="1.300"/></svg></button>
            <div class="flex gap-px pl-[3px] [&>button]:relative [&>button]:flex [&>button]:items-center [&>button]:justify-center [&>button]:w-12">
                <button aria-label="Edge"><svg width="21" height="21" viewBox="0 0 21 21"><path d="M1 10C1 4 5 0 11 0c6 0 9 4 9 9v3H7c0 4 6 6 12 3v4c-7 4-16 1-16-6 0-4 2-6 5-7-1 1-1 2-1 3h7c0-4-3-5-6-5-3 1-6 3-7 6z" fill="#1583dd"/></svg></button>
                <button aria-label="File Explorer"><svg width="22" height="20" viewBox="0 0 22 20"><path d="M0 1h8l2 2h12v15H0z" fill="#ffe08a"/><path d="M0 1h8v2H0z" fill="#f0b93a"/><path d="M4 19v-9h14v9h-4v-5H8v5z" fill="#3fb0ea"/></svg><span class="absolute bottom-0 inset-x-1 h-0.5 bg-[#76b9ed]"></span></button>
                <button aria-label="Calculator"><svg width="18" height="24" viewBox="0 0 18 24"><path d="M0 0h18v24H0z" fill="#fff"/><path d="M2 2h14v4H2z" fill="#111"/><path d="M2 9h3v3H2zM7.500 9h3v3h-3zM13 9h3v3h-3zM2 14h3v3H2zM7.500 14h3v3h-3zM13 14h3v3h-3zM2 19h3v3H2zM7.500 19h3v3h-3zM13 19h3v3h-3z" fill="#111"/></svg><span class="absolute bottom-0 inset-x-1 h-0.5 bg-[#76b9ed]"></span></button>
                <button aria-label="Chrome"><svg width="22" height="22" viewBox="0 0 22 22"><circle cx="11" cy="11" r="11" fill="#ffcd40"/><path d="M1.500 5.500A11 11 0 0 0 10 22l5-8.500-4-2.500z" fill="#0f9d58"/><path d="M11 5.500h9.500A11 11 0 0 0 1.500 5.500L6 13z" fill="#db4437"/><circle cx="11" cy="11" r="5.200" fill="#f1f1f1"/><circle cx="11" cy="11" r="4" fill="#4285f4"/></svg><span class="absolute bottom-0 inset-x-1 h-0.5 bg-[#76b9ed] border-r-8 border-[#4d7ba0]"></span></button>
                <button aria-label="Snipping Tool"><svg width="24" height="22" viewBox="0 0 24 22"><ellipse cx="11" cy="11" rx="10" ry="7" fill="#777" transform="rotate(-15 11 11)"/><ellipse cx="12" cy="8" rx="10.500" ry="6.500" fill="#f2f2f2" stroke="#cc2222" stroke-width="1.500" transform="rotate(-15 12 8)"/><path d="M8 8h8M13 3l-2 9 6 5M10 5l8 10" fill="none" stroke="#666"/><g fill="none" stroke="#1c94d8" stroke-width="1.800"><circle cx="16" cy="18" r="2.500"/><circle cx="21" cy="14" r="2"/><path d="M14 11l4 5"/></g></svg></button>
                <button aria-label="Inkscape"><svg width="22" height="21" viewBox="0 0 22 21"><path d="M11 1l9 9c0 2-3 2-5 2l2 2-4 1 1 3-3 2-3-3 2-2-6-2 3-1c-3 0-6-1-6-3z" fill="#1a1e24" stroke="#3a424c" stroke-width=".8"/><path d="M11 1l5 5-2 2-2-1-2 2-2-2-2 1z" fill="#f2f2f2"/><path d="M14 9l6 1c0 2-3 2-5 1z" fill="#5a80b0"/></svg><span class="absolute bottom-0 inset-x-1 h-0.5 bg-[#76b9ed] border-r-8 border-[#4d7ba0]"></span></button>
                <button aria-label="AutoCAD" class="bg-[#35383f]"><svg width="24" height="24" viewBox="0 0 24 24"><path d="M0 0h24v24H0z" fill="#fbe6e0"/><use href="#logoA" x="3" y="2" width="18" height="20"/></svg><span class="absolute bottom-0 inset-x-0 h-0.5 bg-[#76b9ed]"></span></button>
            </div>
        </div>
        <div class="flex items-center">
            <svg class="mr-5" width="15" height="17" viewBox="0 0 15 17" fill="none" stroke="#fff" stroke-width="1.200"><circle cx="10.500" cy="3.500" r="2.800"/><path d="M7 9c1-3 7-3 7 1"/><circle cx="4.500" cy="9" r="2.500"/><path d="M.6 15.500c0-5 8-5 8 0"/></svg>
            <svg class="mr-2.5" width="12" height="8" viewBox="0 0 12 8"><path d="M1 7l5-5 5 5" fill="none" stroke="#fff" stroke-width="1.300"/></svg>
            <svg class="mr-2" width="17" height="13" viewBox="0 0 17 13"><path d="M5.500 4.500h9v6h-9z" fill="none" stroke="#fff"/><path d="M7 6h6v3H7zM15 6h1.500v3H15zM1 2h4v3H1zM1.500 0h1v2h-1zM4 0h1v2H4zM2.500 5h1v4h2v1h-3z" fill="#fff"/></svg>
            <svg class="mr-2" width="17" height="14" viewBox="0 0 17 14" fill="none" stroke="#fff"><path d="M1 5h3l3-4v12L4 9H1z"/><path d="M9 5c1 1 1 3 0 4"/><path d="M11 3c3 2 3 6 0 8M13 1c4 3 4 9 0 12" stroke="#777"/></svg>
            <svg class="mr-2.5" width="16" height="16" viewBox="0 0 16 16" fill="none"><path d="M3 15C3 9 8 4 15 4M6 15c0-5 4-8 9-8M9 15c0-3 3-5 6-5M12 15c0-2 1-2 3-2" stroke="#777"/><path d="M3 0v6M0 3h6M1 1l4 4M5 1L1 5" stroke="#fff" stroke-width=".8"/></svg>
            <span class="mr-3">ENG</span>
            <p class="w-[58px] text-center leading-[18px] whitespace-nowrap">6:28 PM<br>15/05/2020</p>
            <svg class="ml-4 mr-3" width="25" height="26" viewBox="0 0 25 26"><path d="M1 2h16v13H9l-4 4v-4H1z" fill="#fff"/><path d="M4 5.500h10M4 8.500h10M4 11.500h10" stroke="#111"/><circle cx="16" cy="17" r="8" fill="#333840" stroke="#777"/><text x="16" y="21" text-anchor="middle" font-size="11" font-weight="bold" fill="#fff">4</text></svg>
            <span class="w-px h-full mr-1 bg-[#4a4c50]"></span>
        </div>
    </div>
</body>
</html>
